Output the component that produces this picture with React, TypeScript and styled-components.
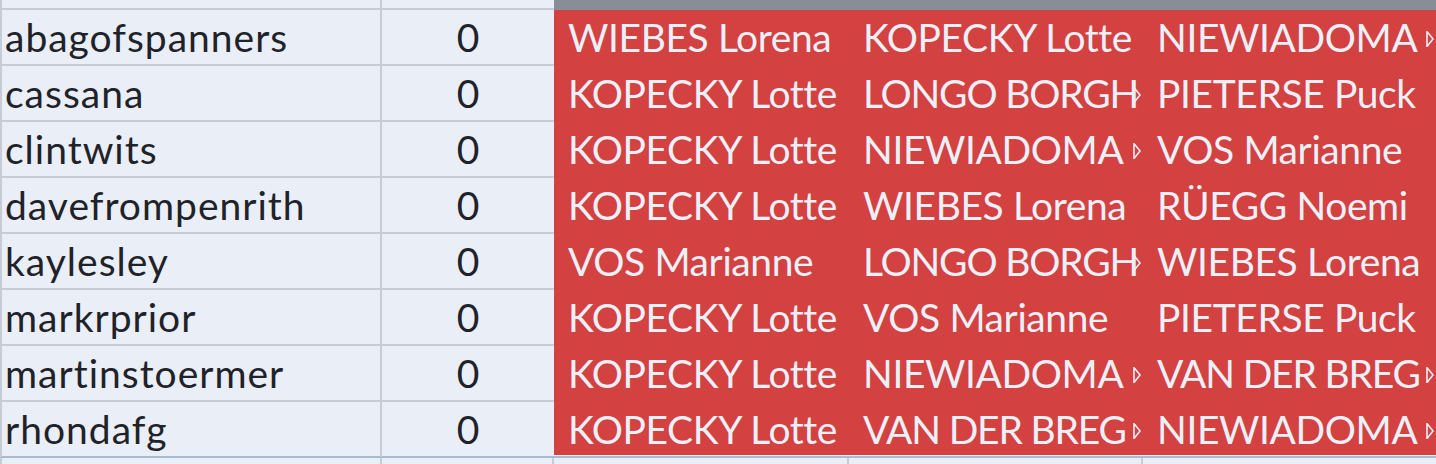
import React from "react";
import styled, { createGlobalStyle } from "styled-components";

const Global = createGlobalStyle`
  html, body { margin: 0; padding: 0; background: #e9eef7; overflow: hidden; }
  body { font-family: Lato, "Open Sans", sans-serif; }
`;

const LINE = "#c6ccd6";
const RED = "#d44141";
const HEAD = "#888e97";
const CELL_BG = "#e9eef7";

type Kind = "name" | "num" | "red" | "head" | "blank";

const Sheet = styled.div`
  display: grid;
  grid-template-columns: 382px 172px 295px 294px 293px;
  width: 1436px;
`;

const Cell = styled.div<{ $kind: Kind; $last?: boolean; $top?: boolean }>`
  position: relative;
  box-sizing: border-box;
  height: ${(p) => (p.$top ? "10px" : "56px")};
  display: flex;
  align-items: center;
  overflow: hidden;
  white-space: nowrap;
  font-size: 39px;
  line-height: 1;
  letter-spacing: ${(p) => (p.$kind === "name" ? "1px" : p.$kind === "red" ? "-0.4px" : "0")};
  background: ${(p) => (p.$kind === "red" ? RED : p.$kind === "head" ? HEAD : CELL_BG)};
  color: ${(p) => (p.$kind === "red" ? "#eaf0f8" : "#1f2329")};
  justify-content: ${(p) => (p.$kind === "num" ? "center" : "flex-start")};
  padding-left: ${(p) => (p.$kind === "red" ? "14px" : p.$kind === "name" ? "3px" : "0")};
  border-left: ${(p) => (p.$kind === "name" ? `2px solid ${LINE}` : "none")};
  border-right: ${(p) => (p.$kind === "name" ? `2px solid ${LINE}` : "none")};
  border-bottom: 2px solid
    ${(p) => (p.$last ? "#a6bbd8" : p.$kind === "red" ? RED : p.$kind === "head" ? HEAD : LINE)};
  ${(p) => (p.$kind === "red" && p.$last ? "box-shadow: inset 0 -1px 0 #eef2f8;" : "")}
`;

const CellText = styled.span<{ $tight?: boolean }>`
  letter-spacing: ${(p) => (p.$tight ? "-1.2px" : "inherit")};
`;

const Tail = styled.div<{ $line?: boolean; $left?: boolean }>`
  box-sizing: border-box;
  height: 8px;
  background: ${CELL_BG};
  border-right: ${(p) => (p.$line ? `2px solid ${LINE}` : "none")};
  border-left: ${(p) => (p.$left ? `2px solid ${LINE}` : "none")};
`;

const Arrow = styled.svg`
  position: absolute;
  right: 2px;
  top: 20px;
  width: 8px;
  height: 18px;
`;

type Row = { name: string; picks: string[] };

const rows: Row[] = [
  { name: "abagofspanners", picks: ["WIEBES Lorena", "KOPECKY Lotte", "NIEWIADOMA"] },
  { name: "cassana", picks: ["KOPECKY Lotte", "LONGO BORGH", "PIETERSE Puck"] },
  { name: "clintwits", picks: ["KOPECKY Lotte", "NIEWIADOMA", "VOS Marianne"] },
  { name: "davefrompenrith", picks: ["KOPECKY Lotte", "WIEBES Lorena", "RÜEGG Noemi"] },
  { name: "kaylesley", picks: ["VOS Marianne", "LONGO BORGH", "WIEBES Lorena"] },
  { name: "markrprior", picks: ["KOPECKY Lotte", "VOS Marianne", "PIETERSE Puck"] },
  { name: "martinstoermer", picks: ["KOPECKY Lotte", "NIEWIADOMA", "VAN DER BREG"] },
  { name: "rhondafg", picks: ["KOPECKY Lotte", "VAN DER BREG", "NIEWIADOMA"] },
];

const truncated = new Set(["NIEWIADOMA", "LONGO BORGH", "VAN DER BREG"]);
const tight = new Set(["LONGO BORGH", "VAN DER BREG"]);

const Overflow = () => (
  <Arrow viewBox="0 0 8 18">
    <path d="M1 1 V17 M1 1.5 L7 9 L1 16.5" fill="none" stroke="#eaf0f8" strokeWidth="1.6" />
  </Arrow>
);

const RedCell: React.FC<{ text: string; last?: boolean }> = ({ text, last }) => (
  <Cell $kind="red" $last={last}>
    <CellText $tight={tight.has(text)}>{text}</CellText>
    {truncated.has(text) && <Overflow />}
  </Cell>
);

export default function App() {
  return (
    <>
      <Global />
      <Sheet>
        <Cell $kind="name" $top />
        <Cell $kind="blank" $top />
        <Cell $kind="head" $top />
        <Cell $kind="head" $top />
        <Cell $kind="head" $top />
        {rows.map((r, i) => {
          const last = i === rows.length - 1;
          return (
            <React.Fragment key={r.name}>
              <Cell $kind="name" $last={last}>{r.name}</Cell>
              <Cell $kind="num" $last={last}>0</Cell>
              {r.picks.map((p, j) => (
                <RedCell key={j} text={p} last={last} />
              ))}
            </React.Fragment>
          );
        })}
        <Tail $line $left />
        <Tail $line />
        <Tail $line />
        <Tail $line />
        <Tail />
      </Sheet>
    </>
  );
}
